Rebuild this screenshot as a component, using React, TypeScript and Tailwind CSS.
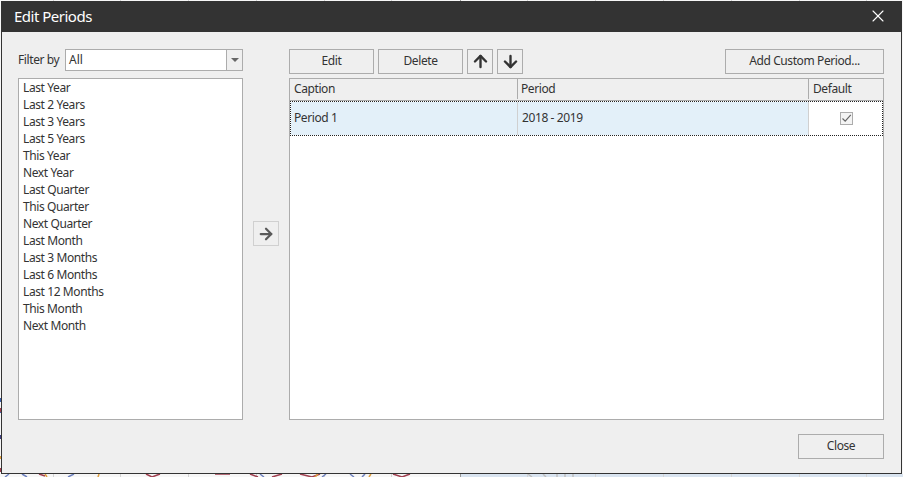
import { ArrowDown, ArrowRight, ArrowUp, X } from 'lucide-react';

const presets = [
  'Last Year',
  'Last 2 Years',
  'Last 3 Years',
  'Last 5 Years',
  'This Year',
  'Next Year',
  'Last Quarter',
  'This Quarter',
  'Next Quarter',
  'Last Month',
  'Last 3 Months',
  'Last 6 Months',
  'Last 12 Months',
  'This Month',
  'Next Month',
];

const gridLines = [53, 120, 188, 256, 324, 391, 460, 527, 595, 663, 731, 799, 866];

const btn = 'flex h-[25px] items-center justify-center border border-[#acacac] bg-[#efefef] pb-[1px] text-[12px] tracking-[-0.4px] text-[#333333]';

// the chart of the window behind the dialog, only its edge shows
function BackdropChart() {
  return (
    <svg className="absolute inset-0" width="903" height="477" fill="none">
      <rect x="460" y="474" width="443" height="3" fill="#d9e4f0" />
      {gridLines.map((x) => (
        <path key={x} d={`M${x + 0.5} 0V477`} stroke={x === 460 ? '#999999' : '#d4d4d4'} />
      ))}
      <g strokeWidth="1.5">
        <path d="M5 477L9 474M22 474L27 477M68 477L74 474M260 474L264 477M322 477L326 474M350 474L354 477M362 477L365 474" stroke="#7083c0" />
        <path d="M39 474L45 476M146 474L152 477L160 474M215 474H230M250 474L258 477M272 477L282 474M300 474L312 477L320 474M393 474L402 477L410 474" stroke="#a04050" />
        <path d="M45 474L47 477M98 477L99 474M318 474L315 477M369 477L371 474" stroke="#e0a040" />
        <path d="M528 474L532 477M543 474L546 477M557 477V474M565 474V477M573 474V477" stroke="#c0c0c0" />
        <path d="M0.5 398V402M0.5 410V413" stroke="#3c5fa8" strokeWidth="1" />
        <path d="M0.5 408V412M0.5 468V472" stroke="#a04050" strokeWidth="1" />
        <path d="M0.5 435V439" stroke="#404080" strokeWidth="1" />
        <path d="M0.5 456V459" stroke="#e0a040" strokeWidth="1" />
      </g>
    </svg>
  );
}

export default function App() {
  return (
    <div className="relative h-[477px] w-[903px] overflow-hidden bg-[#f7f7f7] pt-px pl-px font-['Noto_Sans',sans-serif]">
      <BackdropChart />

      {/* Dialog */}
      <div className="relative flex h-[473px] w-[901px] flex-col border border-t-0 border-[#333333] bg-[#efefef]">
        {/* Title bar */}
        <div className="flex h-[31px] shrink-0 items-center justify-between bg-[#333333] pr-[13px] pb-[1px] pl-[12px]">
          <span className="text-[15px] tracking-[-0.5px] text-white">Edit Periods</span>
          <X className="h-[20px] w-[20px] text-white" strokeWidth={1.3} />
        </div>

        {/* Body */}
        <div className="flex flex-1 flex-col pt-[17px] pr-[17px] pl-[16px]">
          <div className="flex h-[371px] shrink-0">
            {/* Left column */}
            <div className="flex w-[225px] shrink-0 flex-col">
              <div className="flex h-[22px] items-center">
                <span className="w-[47px] pb-[1px] text-[12px] tracking-[-0.4px] text-[#333333]">Filter by</span>
                <div className="flex h-[22px] flex-1 items-center border border-[#acacac] bg-white">
                  <span className="flex-1 pb-[1px] pl-[3px] text-[12px] text-[#333333]">All</span>
                  <div className="flex h-full w-[16px] items-center justify-center border-l border-[#acacac] bg-[#efefef]">
                    <div className="h-0 w-0 border-x-[4px] border-t-[4px] border-x-transparent border-t-[#666666]" />
                  </div>
                </div>
              </div>
              <div className="mt-[7px] flex-1 border border-[#acacac] bg-white pl-[4px]">
                {presets.map((p) => (
                  <div key={p} className="flex h-[17px] items-center text-[12px] tracking-[-0.4px] text-[#333333]">
                    {p}
                  </div>
                ))}
              </div>
            </div>

            {/* Move button */}
            <div className="flex w-[46px] shrink-0 items-center justify-center pb-[2px]">
              <div className="flex h-[25px] w-[26px] items-center justify-center border border-[#d0d0d0]">
                <ArrowRight className="h-[18px] w-[18px] text-[#5a5a5a]" strokeWidth={3} />
              </div>
            </div>

            {/* Right column */}
            <div className="flex min-w-0 flex-1 flex-col">
              <div className="flex h-[25px] shrink-0 gap-[4px]">
                <button className={`${btn} w-[85px]`}>Edit</button>
                <button className={`${btn} w-[85px]`}>Delete</button>
                <button className={`${btn} w-[26px]`}>
                  <ArrowUp className="h-[19px] w-[19px] text-[#333333]" strokeWidth={3} />
                </button>
                <button className={`${btn} w-[26px]`}>
                  <ArrowDown className="h-[19px] w-[19px] text-[#333333]" strokeWidth={3} />
                </button>
                <button className={`${btn} ml-auto w-[159px]`}>Add Custom Period...</button>
              </div>
              <div className="mt-[4px] flex-1 border border-[#acacac] bg-white">
                {/* Header */}
                <div className="flex h-[22px] border-b border-[#acacac] bg-[#efefef] pb-[1px] text-[12px] tracking-[-0.4px] text-[#333333]">
                  <div className="flex w-[228px] items-center border-r border-[#acacac] pl-[4px]">Caption</div>
                  <div className="flex w-[291px] items-center border-r border-[#acacac] pl-[3px]">Period</div>
                  <div className="flex flex-1 items-center pl-[4px]">Default</div>
                </div>
                {/* Row */}
                <div className="flex h-[35px] border border-dotted border-[#222222] text-[12px] tracking-[-0.4px] text-[#333333]">
                  <div className="flex w-[227px] items-center border-r border-[#d0d0d0] bg-[#e3f0f9] pb-[1px] pl-[3px]">Period 1</div>
                  <div className="flex w-[291px] items-center border-r border-[#d0d0d0] bg-[#e3f0f9] pb-[1px] pl-[4px]">2018 - 2019</div>
                  <div className="flex flex-1 items-center justify-center bg-white pl-[2px]">
                    <div className="flex h-[13px] w-[13px] items-center justify-center border border-[#acacac] bg-[#f4f4f4]">
                      <svg viewBox="0 0 11 11" className="h-[11px] w-[11px]" fill="none" stroke="#666666" strokeWidth="1.2">
                        <path d="M1.5 5.5 L4.2 8.2 L9.8 1.8" />
                      </svg>
                    </div>
                  </div>
                </div>
              </div>
            </div>
          </div>

          {/* Footer */}
          <div className="flex flex-1 justify-end pt-[14px]">
            <button className={`${btn} w-[86px]`}>Close</button>
          </div>
        </div>
      </div>
    </div>
  );
}
